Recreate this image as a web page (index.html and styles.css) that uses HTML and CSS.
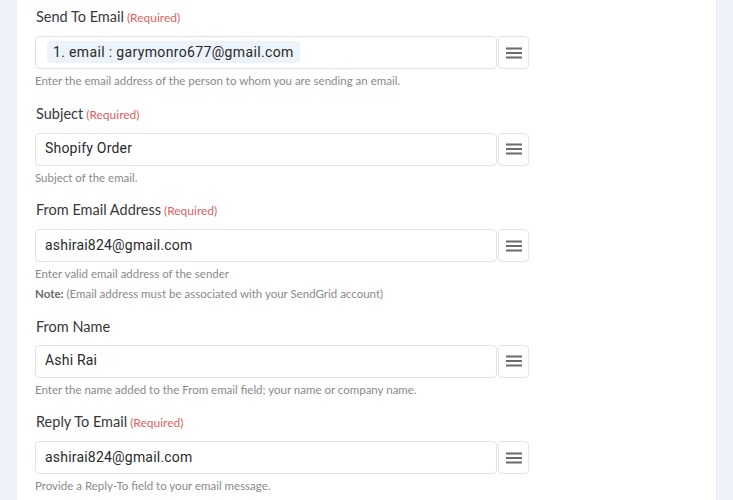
FILE: index.html
```html
<!DOCTYPE html>
<html lang="en">
<head>
  <meta charset="UTF-8">
  <meta name="viewport" content="width=device-width, initial-scale=1.0">
  <title>SendGrid Action</title>
  <link rel="stylesheet" href="styles.css">
</head>
<body>
  <div class="panel">
    <!-- Send To Email -->
    <div class="field">
      <label class="field-label">Send To Email<span class="req">(Required)</span></label>
      <div class="field-row">
        <div class="field-input">
          <span class="tag">1. email&nbsp;: garymonro677@gmail.com</span>
        </div>
        <button class="menu-btn" aria-label="Options">
          <svg width="16" height="12" viewBox="0 0 16 12"><path d="M0 1.5h16M0 6h16M0 10.5h16" stroke="#6b6b6b" stroke-width="2.2"/></svg>
        </button>
      </div>
      <p class="help">Enter the email address of the person to whom you are sending an email.</p>
    </div>

    <!-- Subject -->
    <div class="field">
      <label class="field-label">Subject<span class="req">(Required)</span></label>
      <div class="field-row">
        <div class="field-input">Shopify Order</div>
        <button class="menu-btn" aria-label="Options">
          <svg width="16" height="12" viewBox="0 0 16 12"><path d="M0 1.5h16M0 6h16M0 10.5h16" stroke="#6b6b6b" stroke-width="2.2"/></svg>
        </button>
      </div>
      <p class="help">Subject of the email.</p>
    </div>

    <!-- From Email Address -->
    <div class="field">
      <label class="field-label">From Email Address<span class="req">(Required)</span></label>
      <div class="field-row">
        <div class="field-input">ashirai824@gmail.com</div>
        <button class="menu-btn" aria-label="Options">
          <svg width="16" height="12" viewBox="0 0 16 12"><path d="M0 1.5h16M0 6h16M0 10.5h16" stroke="#6b6b6b" stroke-width="2.2"/></svg>
        </button>
      </div>
      <p class="help">Enter valid email address of the sender</p>
      <p class="help note"><b>Note:</b> (Email address must be associated with your SendGrid account)</p>
    </div>

    <!-- From Name -->
    <div class="field">
      <label class="field-label">From Name</label>
      <div class="field-row">
        <div class="field-input">Ashi Rai</div>
        <button class="menu-btn" aria-label="Options">
          <svg width="16" height="12" viewBox="0 0 16 12"><path d="M0 1.5h16M0 6h16M0 10.5h16" stroke="#6b6b6b" stroke-width="2.2"/></svg>
        </button>
      </div>
      <p class="help">Enter the name added to the From email field; your name or company name.</p>
    </div>

    <!-- Reply To Email -->
    <div class="field">
      <label class="field-label">Reply To Email<span class="req">(Required)</span></label>
      <div class="field-row">
        <div class="field-input">ashirai824@gmail.com</div>
        <button class="menu-btn" aria-label="Options">
          <svg width="16" height="12" viewBox="0 0 16 12"><path d="M0 1.5h16M0 6h16M0 10.5h16" stroke="#6b6b6b" stroke-width="2.2"/></svg>
        </button>
      </div>
      <p class="help">Provide a Reply-To field to your email message.</p>
    </div>
  </div>
</body>
</html>
```

FILE: styles.css
```css
body {
  margin: 0;
  background-color: #eff2fa;
  font-family: Lato, "Open Sans", sans-serif;
}
.panel {
  background: #fff;
  margin: 0 16px 0 17px;
  padding: 7px 18px 0;
  height: 500px;
  box-sizing: border-box;
  border-right: 1px solid #e6e8f0;
}
.field {
  margin-bottom: 14.5px;
}
.field-label {
  display: block;
  font-size: 14.5px;
  line-height: 20px;
  color: #383838;
  margin-bottom: 8px;
  padding-left: 1px;
}
.req {
  font-size: 12px;
  color: #e0605c;
  margin-left: 3px;
}
.field-row {
  display: flex;
  gap: 1px;
}
.field-input {
  width: 462px;
  height: 33px;
  box-sizing: border-box;
  border: 1px solid #e3e3e3;
  border-radius: 4px;
  padding: 0 9px 2px;
  display: flex;
  align-items: center;
  font-family: Roboto, "Open Sans", sans-serif;
  font-size: 14px;
  color: #2a2a2a;
  letter-spacing: 0.2px;
}
.tag {
  background: #edf3fb;
  border-radius: 4px;
  padding: 3px 6px;
  margin-left: 2px;
  letter-spacing: 0.35px;
}
.menu-btn {
  width: 31px;
  height: 33px;
  box-sizing: border-box;
  border: 1px solid #e3e3e3;
  border-radius: 4px;
  background: #fff;
  padding: 0;
  display: flex;
  align-items: center;
  justify-content: center;
  cursor: pointer;
}
.help {
  margin: 4px 0 0;
  font-size: 11.5px;
  line-height: 16px;
  color: #8a8a8a;
}
.note {
  margin-top: 4px;
}
.note b {
  color: #6a6a6a;
}
```
